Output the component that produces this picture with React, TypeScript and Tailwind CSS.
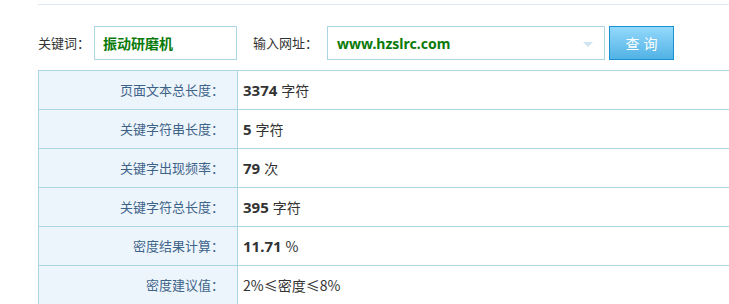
const rows = [
  { label: "页面文本总长度：", value: "3374", unit: "字符" },
  { label: "关键字符串长度：", value: "5", unit: "字符" },
  { label: "关键字出现频率：", value: "79", unit: "次" },
  { label: "关键字符总长度：", value: "395", unit: "字符" },
  { label: "密度结果计算：", value: "11.71", unit: "%" },
  { label: "密度建议值：", value: "", unit: "2%≤密度≤8%" },
];

const App = () => {
  return (
    <div className="w-[729px] h-[304px] overflow-hidden bg-white text-[#333] font-[family-name:'Noto_Sans','Noto_Sans_CJK_SC',sans-serif]">
      <div className="ml-[38px] mt-[4px] h-px bg-[#dbe9f2]" />

      {/* query form */}
      <div className="flex items-center ml-[38px] mt-[21px] h-[34px]">
        <span className="w-[56px] text-[13px] text-[#333] font-[family-name:'Noto_Sans_CJK_SC',sans-serif]">关键词：</span>
        <div className="w-[143px] h-[34px] border border-[#a9d5e5] flex items-center pl-[8px]">
          <span className="text-[14px] font-bold text-[#0a7a0a]">振动研磨机</span>
        </div>
        <span className="ml-[16px] w-[74px] text-[13px] text-[#333] font-[family-name:'Noto_Sans_CJK_SC',sans-serif]">输入网址：</span>
        <div className="relative w-[278px] h-[34px] border border-[#a9d5e5] flex items-center pl-[9px]">
          <span className="text-[14px] font-bold text-[#0a7a0a]">www.hzslrc.com</span>
          <span className="absolute right-[11px] top-[15px] w-0 h-0 border-l-[5px] border-r-[5px] border-t-[5px] border-l-transparent border-r-transparent border-t-[#cfe6f2]" />
        </div>
        <button className="ml-[4px] w-[65px] h-[34px] border border-[#1a90d2] bg-gradient-to-b from-[#93d9fc] to-[#50b2e4] text-white text-[14px] tracking-[4px] pl-[4px]">
          查询
        </button>
      </div>

      {/* result table */}
      <div className="ml-[38px] mt-[10px] border-t border-l border-[#a9d5e5]">
        {rows.map((r) => (
          <div key={r.label} className="flex h-[39px] border-b border-[#a9d5e5]">
            <div className="w-[199px] shrink-0 bg-[#edf5fc] border-r border-[#a9d5e5] flex items-center justify-end pr-[13px] text-[13px] text-[#3e6389] font-[family-name:'Noto_Sans_CJK_SC',sans-serif]">
              {r.label}
            </div>
            <div className="flex items-center pl-[5px] text-[14px] text-[#333]">
              {r.value && <span className="font-bold text-[15px] mr-[4px]">{r.value}</span>}
              <span className="text-[14px] font-[family-name:'Noto_Sans_CJK_SC',sans-serif]">{r.unit}</span>
            </div>
          </div>
        ))}
      </div>
    </div>
  );
};

export default App;
